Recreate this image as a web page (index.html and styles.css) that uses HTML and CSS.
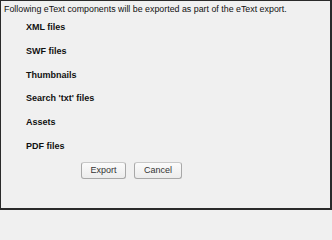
FILE: index.html
```html
<!DOCTYPE html>
<html>
<head>
<meta charset="utf-8">
<link rel="stylesheet" href="styles.css">
</head>
<body>
<div class="panel">
  <p class="intro">Following eText components will be exported as part of the eText export.</p>
  <ul class="items">
    <li>XML files</li>
    <li>SWF files</li>
    <li>Thumbnails</li>
    <li>Search 'txt' files</li>
    <li>Assets</li>
    <li>PDF files</li>
  </ul>
  <div class="actions">
    <button class="btn btn-export">Export</button>
    <button class="btn btn-cancel">Cancel</button>
  </div>
</div>
</body>
</html>
```
FILE: styles.css
```css
html, body {
  margin: 0;
  padding: 0;
  background: #f0f0f0;
}
.panel {
  box-sizing: border-box;
  width: 332px;
  height: 210px;
  background: #f0f0f0;
  border: 1px solid #2a2a2a;
  border-right-width: 2px;
  border-bottom-width: 2px;
  font-family: "Liberation Sans", Arial, sans-serif;
  font-size: 9px;
  color: #111;
  display: flex;
  flex-direction: column;
}
.intro {
  margin: 0;
  padding: 3px 0 0 3px;
  line-height: 11px;
  font-size: 8.85px;
}
.items {
  list-style: none;
  margin: 0;
  padding: 7px 0 0 25px;
  display: flex;
  flex-direction: column;
  gap: 12.8px;
}
.items li {
  font-weight: bold;
  line-height: 11px;
}
.actions {
  display: flex;
  gap: 8px;
  padding: 10px 0 0 80px;
}
.btn {
  box-sizing: border-box;
  height: 17px;
  padding: 0;
  font-family: "Liberation Sans", Arial, sans-serif;
  font-size: 9px;
  color: #333;
  border: 1px solid #a8a8a8;
  border-top-color: #c8c8c8;
  border-radius: 3px;
  background: linear-gradient(#fbfbfb, #ececec);
}
.btn-export { width: 45px; }
.btn-cancel { width: 48px; }
```
